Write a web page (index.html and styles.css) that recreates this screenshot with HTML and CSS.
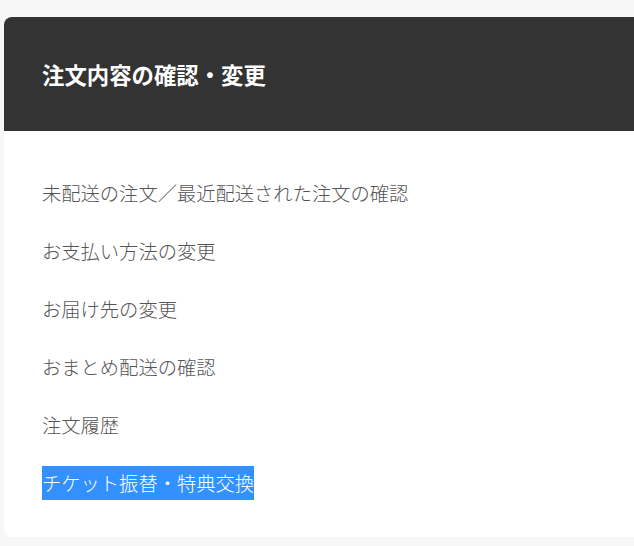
FILE: index.html
```html
<!DOCTYPE html>
<html lang="ja">
<head>
    <meta charset="UTF-8">
    <meta name="viewport" content="width=device-width, initial-scale=1.0">
    <title>注文内容の確認・変更</title>
    <link rel="stylesheet" href="styles.css">
</head>
<body>

    <div class="card">
        <div class="card-head">
            注文内容の確認・変更
        </div>
        <ul class="menu">
            <li><a href="#">未配送の注文／最近配送された注文の確認</a></li>
            <li><a href="#">お支払い方法の変更</a></li>
            <li><a href="#">お届け先の変更</a></li>
            <li><a href="#">おまとめ配送の確認</a></li>
            <li><a href="#">注文履歴</a></li>
            <li><a href="#" class="active">チケット振替・特典交換</a></li>
        </ul>
    </div>

</body>
</html>
```

FILE: styles.css
```css
body {
    font-family: "Noto Sans CJK JP", "Noto Sans", sans-serif;
    margin: 0;
    padding: 17px 0 0 4px;
    background-color: #f7f7f7;
}

/* card is cut off by the right edge of the window */
.card {
    background-color: #fff;
    border-radius: 8px 0 0 8px;
    overflow: hidden;
}

.card-head {
    background-color: #333;
    color: #fff;
    font-size: 22.4px;
    font-weight: bold;
    line-height: 34px;
    padding: 40px 38px;
}

.menu {
    list-style: none;
    margin: 0;
    padding: 45px 38px 37px;
    display: flex;
    flex-direction: column;
    gap: 24px;
}

.menu a {
    display: inline-block;
    color: #555;
    font-size: 19.3px;
    font-weight: 300;
    line-height: 34px;
    text-decoration: none;
}

.menu a.active {
    background-color: #3391ff;
    color: #fff;
}
```
